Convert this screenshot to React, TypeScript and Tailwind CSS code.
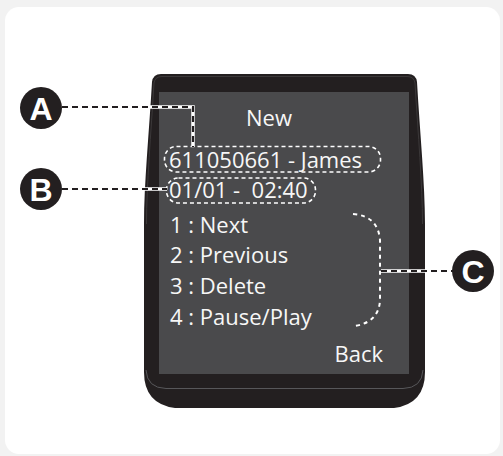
const menu = ['1 : Next', '2 : Previous', '3 : Delete', '4 : Pause/Play'];

const Callout = ({ letter, className }: { letter: string; className: string }) => (
  <div
    className={`absolute flex h-[42px] w-[42px] items-center justify-center rounded-full bg-[#231f20] pt-[1px] text-[32px] font-bold leading-none text-white ${className}`}
    style={{ fontFamily: '"Liberation Sans", Arial, sans-serif' }}
  >
    {letter}
  </div>
);

const DeviceBody = () => (
  <svg className="absolute inset-0" width="281" height="334" viewBox="0 0 281 334">
    <path
      d="M17 0 L264 0 Q272 0 273 8 C276 60 281 110 281 150 L281 298 Q281 330 250 334 L31 334 Q0 330 0 298 L0 150 C0 110 5 60 8 8 Q9 0 17 0 Z"
      fill="#231f20"
    />
    <path
      d="M18 2.5 L263 2.5 Q270 2.5 271 9 C274 60 278.5 110 278.5 150"
      fill="none"
      stroke="#3b3839"
      strokeWidth="1"
    />
    <path d="M2.5 150 C2.5 110 7 60 10 9 Q11 2.5 18 2.5" fill="none" stroke="#3b3839" strokeWidth="1" />
    <path
      d="M2 296 Q3 314 22 314.5 L259 314.5 Q278 314 279 296"
      fill="none"
      stroke="#57575a"
      strokeWidth="1"
    />
  </svg>
);

const Annotations = () => (
  <svg className="pointer-events-none absolute left-0 top-0" width="503" height="456" viewBox="0 0 503 456">
    {/* dashed pills round the number and the date */}
    <rect x="164.5" y="146.5" width="216" height="25.5" rx="12" fill="none" stroke="#fff" strokeWidth="1.6" strokeDasharray="4 3" />
    <rect x="166.5" y="178" width="149" height="25" rx="12" fill="none" stroke="#fff" strokeWidth="1.6" strokeDasharray="4 3" />
    {/* bracket round the menu */}
    <path d="M353 214 Q378 216 380 240 L380 300 Q379 322 355 326" fill="none" stroke="#fff" strokeWidth="2" strokeDasharray="4 4" />
    {/* leader lines */}
    <g fill="none" strokeLinejoin="miter">
      <path d="M62 107 H193 V147" stroke="#fff" strokeWidth="3.5" />
      <path d="M62 107 H193 V147" stroke="#231f20" strokeWidth="2.2" strokeDasharray="6 4" />
      <path d="M62 189 H167" stroke="#fff" strokeWidth="3.5" />
      <path d="M62 189 H167" stroke="#231f20" strokeWidth="2.2" strokeDasharray="6 4" />
      <path d="M381 271 H453" stroke="#fff" strokeWidth="3.5" />
      <path d="M381 271 H453" stroke="#231f20" strokeWidth="2.2" strokeDasharray="6 4" />
    </g>
  </svg>
);

export default function App() {
  return (
    <div className="relative h-[456px] w-[503px] overflow-hidden bg-[#f2f2f2] pl-[5px] pt-[7px]">
      <div className="h-[447px] w-[495px] rounded-[14px] bg-white pl-[139px] pt-[67px]">
        <div className="relative h-[334px] w-[281px] pl-[15px] pt-[18px]">
          <DeviceBody />
          <div
            className="relative flex h-[282px] w-[250px] flex-col bg-[#4a4a4c] pt-[9.5px] text-[22px] text-[#f7f7f7]"
            style={{ fontFamily: '"Open Sans", "Noto Sans", sans-serif' }}
          >
            <div className="ml-[87px] leading-[30px]">New</div>
            <div className="ml-[10px] mt-[12px] leading-[30px]">611050661 - James</div>
            <div className="ml-[10px] leading-[30px] whitespace-pre">01/01 -  02:40</div>
            <div className="ml-[11px] mt-[5px] flex flex-col">
              {menu.map((m) => (
                <div key={m} className="leading-[30.7px]">
                  {m}
                </div>
              ))}
            </div>
            <div className="mr-[26px] mt-[7px] self-end leading-[30px]">Back</div>
          </div>
        </div>
      </div>
      <Annotations />
      <Callout letter="A" className="left-[20px] top-[87px]" />
      <Callout letter="B" className="left-[20px] top-[168px]" />
      <Callout letter="C" className="left-[452px] top-[250px]" />
    </div>
  );
}
